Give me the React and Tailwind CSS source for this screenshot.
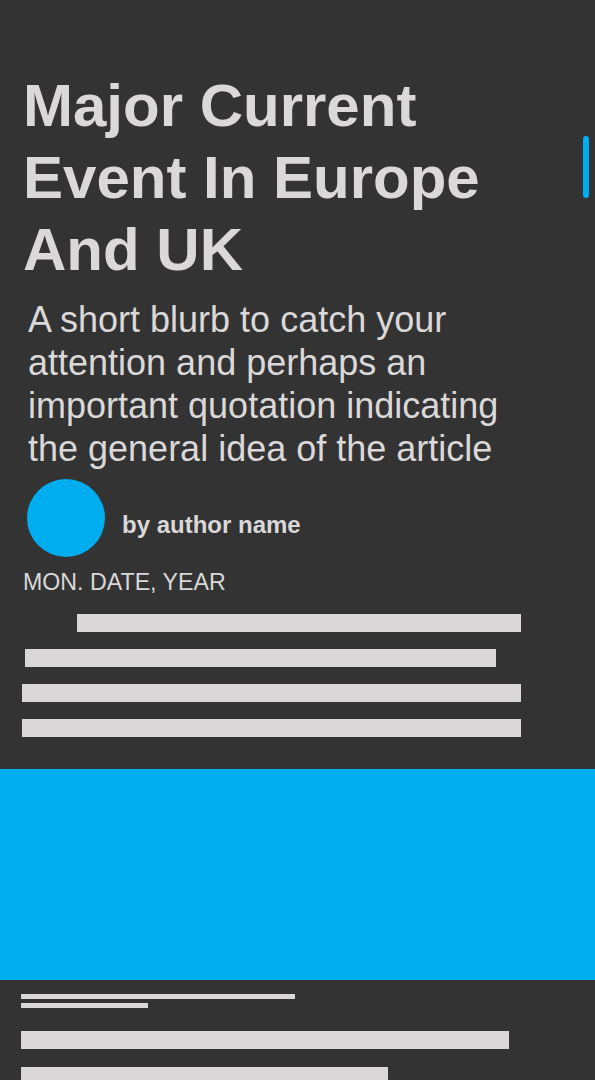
export default function App() {
  return (
    <div className="relative min-h-[1080px] w-[595px] overflow-hidden bg-[#333333] font-['Liberation_Sans',Arial,sans-serif] text-[#dad8d9]">
      {/* scroll indicator */}
      <div className="absolute left-[583px] top-[136px] h-[62px] w-[6px] rounded-full bg-[#00adef]" />

      {/* Headline */}
      <h1 className="ml-[23px] mt-[70px] w-[520px] text-[60px] font-bold leading-[72px]">
        Major Current Event In Europe And UK
      </h1>

      {/* Blurb */}
      <p className="ml-[28px] mt-[12px] w-[500px] text-[36px] leading-[43px]">
        A short blurb to catch your attention and perhaps an important quotation indicating the general idea of the article
      </p>

      {/* Author */}
      <div className="ml-[27px] mt-[9px] flex items-center gap-[17px]">
        <div className="h-[78px] w-[78px] shrink-0 rounded-full bg-[#00adef]" />
        <span className="pt-[14px] text-[24px] font-bold">by author name</span>
      </div>

      <div className="ml-[23px] mt-[11px] text-[23.2px] leading-[28px]">MON. DATE, YEAR</div>

      {/* Body lines */}
      <div className="mt-[18px] flex flex-col gap-[17px]">
        <div className="ml-[77px] h-[18px] w-[444px] bg-[#d9d7d8]" />
        <div className="ml-[25px] h-[18px] w-[471px] bg-[#d9d7d8]" />
        <div className="ml-[22px] h-[18px] w-[499px] bg-[#d9d7d8]" />
        <div className="ml-[22px] h-[18px] w-[499px] bg-[#d9d7d8]" />
      </div>

      {/* Feature image block */}
      <div className="mt-[32px] h-[211px] w-full bg-[#00adef]" />

      {/* Caption */}
      <div className="ml-[21px] mt-[14px] flex flex-col gap-[4px]">
        <div className="h-[5px] w-[274px] bg-[#d9d7d8]" />
        <div className="h-[5px] w-[127px] bg-[#d9d7d8]" />
      </div>

      <div className="ml-[21px] mt-[23px] flex flex-col gap-[18px]">
        <div className="h-[18px] w-[488px] bg-[#d9d7d8]" />
        <div className="h-[18px] w-[367px] bg-[#d9d7d8]" />
      </div>
    </div>
  );
}
